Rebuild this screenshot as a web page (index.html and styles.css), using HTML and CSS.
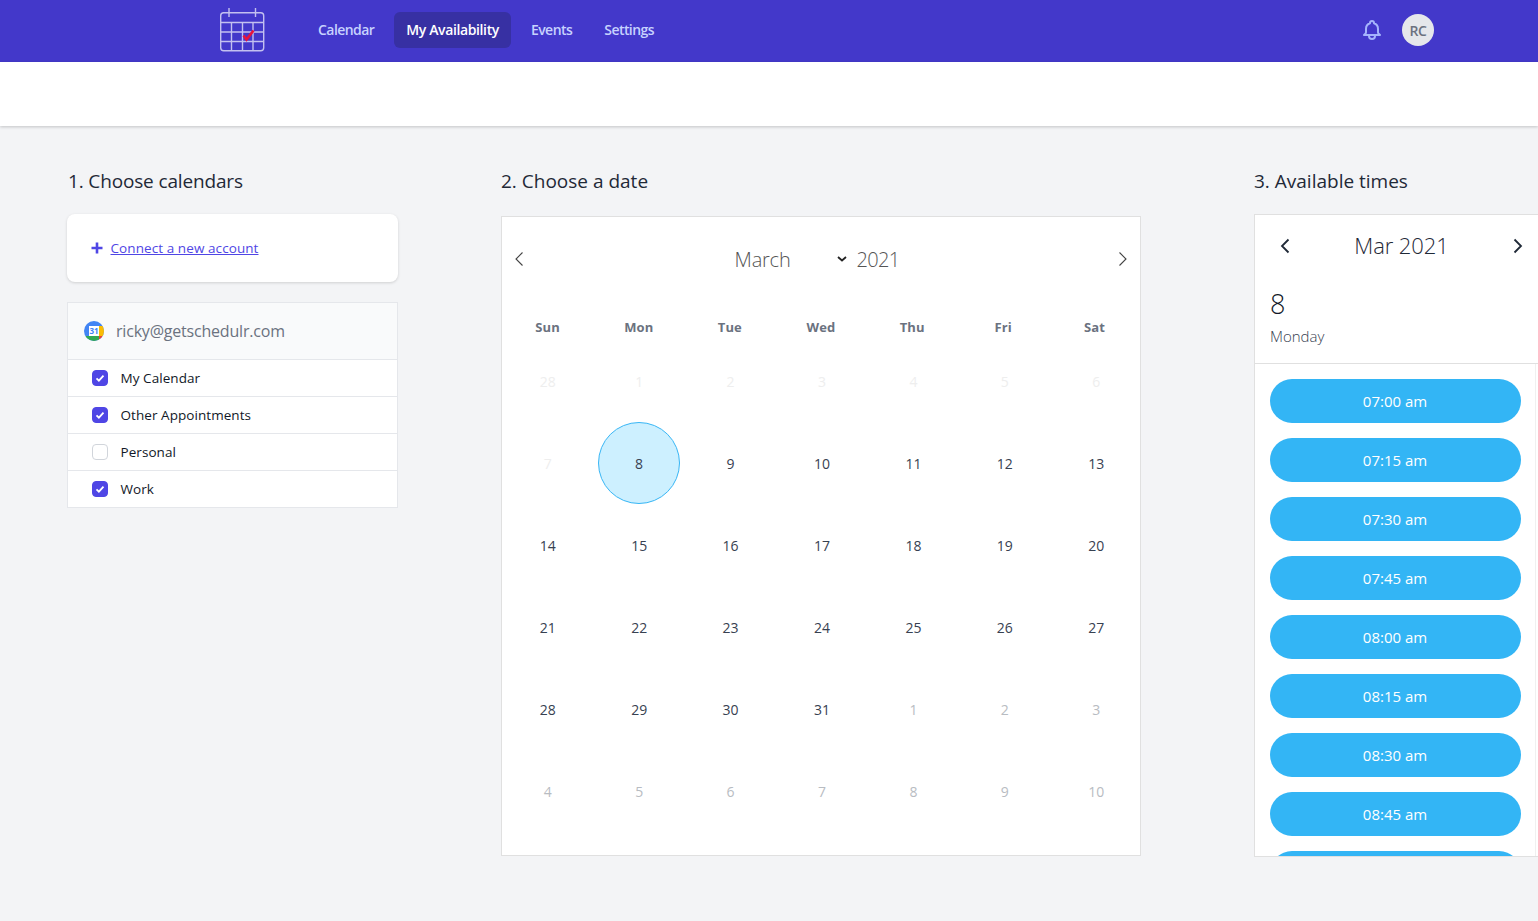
FILE: index.html
```html
<!DOCTYPE html>
<html lang="en">
<head>
<meta charset="utf-8">
<title>My Availability</title>
<link rel="stylesheet" href="styles.css">
</head>
<body>
<header class="topbar">
  <svg class="logo" width="46" height="46" viewBox="0 0 46 46" fill="none">
    <g stroke="#c3c0f0" stroke-width="1.4">
      <rect x="1.7" y="5.7" width="43" height="38" rx="3"/>
      <path d="M1.7 15.5h43M1.7 25h43M1.7 34.500h43M12.500 15.500v28M23.500 15.500v28M34 15.500v28M10 1v9M36.500 1v9"/>
    </g>
    <path d="M24.500 28.500l3 4 7-9" stroke="#e8123c" stroke-width="2.600"/>
  </svg>
  <nav class="nav">
    <a class="nav-link">Calendar</a>
    <a class="nav-link active">My Availability</a>
    <a class="nav-link">Events</a>
    <a class="nav-link">Settings</a>
  </nav>
  <div class="top-right">
    <svg class="bell" width="24" height="24" viewBox="0 0 24 24" fill="none" stroke="#a5b4fc" stroke-width="2" stroke-linecap="round" stroke-linejoin="round">
      <path d="M15 17h5l-1.400-1.400A2 2 0 0 1 18 14.200V11a6 6 0 0 0-4-5.700V5a2 2 0 1 0-4 0v.3A6 6 0 0 0 6 11v3.200c0 .5-.2 1-.6 1.400L4 17h5m6 0v1a3 3 0 1 1-6 0v-1m6 0H9"/>
    </svg>
    <div class="avatar">RC</div>
  </div>
</header>
<div class="subbar"></div>
<main class="columns">
  <section class="col col-1">
    <h2 class="col-title">1. Choose calendars</h2>
    <div class="connect-card">
      <svg class="plus" width="12" height="12" viewBox="0 0 12 12"><path d="M6 .5v11M.5 6h11" stroke="#4f46e5" stroke-width="2.600"/></svg>
      <a class="connect-link">Connect a new account</a>
    </div>
    <div class="account">
      <div class="account-head">
        <svg class="gcal" width="20" height="20" viewBox="0 0 20 20">
          <defs><clipPath id="gc"><circle cx="10" cy="10" r="10"/></clipPath></defs>
          <g clip-path="url(#gc)">
            <rect width="20" height="20" fill="#4285f4"/>
            <rect x="15" y="5" width="5" height="10" fill="#fbbc04"/>
            <rect y="15" width="15" height="5" fill="#34a853"/>
            <rect x="15" y="15" width="5" height="5" fill="#ea4335"/>
            <rect x="5" y="5" width="10" height="10" fill="#fff"/>
          </g>
          <text x="10" y="13" class="gcal-num">31</text>
        </svg>
        <span class="account-mail">ricky@getschedulr.com</span>
      </div>
      <label class="cal-row"><span class="check on"><svg width="12" height="12" viewBox="0 0 12 12"><path d="M2.500 6.300l2.400 2.400 4.600-5" stroke="#fff" stroke-width="1.800" fill="none"/></svg></span>My Calendar</label>
      <label class="cal-row"><span class="check on"><svg width="12" height="12" viewBox="0 0 12 12"><path d="M2.500 6.300l2.400 2.400 4.600-5" stroke="#fff" stroke-width="1.800" fill="none"/></svg></span>Other Appointments</label>
      <label class="cal-row"><span class="check"></span>Personal</label>
      <label class="cal-row"><span class="check on"><svg width="12" height="12" viewBox="0 0 12 12"><path d="M2.500 6.300l2.400 2.400 4.600-5" stroke="#fff" stroke-width="1.800" fill="none"/></svg></span>Work</label>
    </div>
  </section>

  <section class="col col-2">
    <h2 class="col-title">2. Choose a date</h2>
    <div class="calendar">
      <div class="cal-head">
        <svg class="cal-arrow" width="10" height="16" viewBox="0 0 10 16"><path d="M8.500 1.500L2 8l6.500 6.500" fill="none" stroke="#444" stroke-width="1.100"/></svg>
        <div class="cal-title">
          <span class="cal-month">March</span>
          <svg class="cal-caret" width="10" height="6" viewBox="0 0 10 6"><path d="M1 1l4 3.500L9 1" fill="none" stroke="#222" stroke-width="1.800"/></svg>
          <span class="cal-year">2021</span>
        </div>
        <svg class="cal-arrow" width="10" height="16" viewBox="0 0 10 16"><path d="M1.500 1.500L8 8l-6.500 6.500" fill="none" stroke="#444" stroke-width="1.100"/></svg>
      </div>
      <div class="weekdays">
        <span>Sun</span><span>Mon</span><span>Tue</span><span>Wed</span><span>Thu</span><span>Fri</span><span>Sat</span>
      </div>
      <div class="days">
        <span class="day faint">28</span><span class="day faint">1</span><span class="day faint">2</span><span class="day faint">3</span><span class="day faint">4</span><span class="day faint">5</span><span class="day faint">6</span>
        <span class="day faint">7</span><span class="day selected"><b>8</b></span><span class="day">9</span><span class="day">10</span><span class="day">11</span><span class="day">12</span><span class="day">13</span>
        <span class="day">14</span><span class="day">15</span><span class="day">16</span><span class="day">17</span><span class="day">18</span><span class="day">19</span><span class="day">20</span>
        <span class="day">21</span><span class="day">22</span><span class="day">23</span><span class="day">24</span><span class="day">25</span><span class="day">26</span><span class="day">27</span>
        <span class="day">28</span><span class="day">29</span><span class="day">30</span><span class="day">31</span><span class="day muted">1</span><span class="day muted">2</span><span class="day muted">3</span>
        <span class="day muted">4</span><span class="day muted">5</span><span class="day muted">6</span><span class="day muted">7</span><span class="day muted">8</span><span class="day muted">9</span><span class="day muted">10</span>
      </div>
    </div>
  </section>

  <section class="col col-3">
    <h2 class="col-title">3. Available times</h2>
    <div class="times">
      <div class="times-head">
        <div class="times-nav">
          <svg width="10" height="16" viewBox="0 0 10 16"><path d="M8.500 1.500L2 8l6.500 6.500" fill="none" stroke="#1f2937" stroke-width="1.800"/></svg>
          <span class="times-month">Mar 2021</span>
          <svg width="10" height="16" viewBox="0 0 10 16"><path d="M1.500 1.500L8 8l-6.500 6.500" fill="none" stroke="#1f2937" stroke-width="1.800"/></svg>
        </div>
        <div class="times-date">8</div>
        <div class="times-day">Monday</div>
      </div>
      <div class="times-list">
        <button class="slot">07:00 am</button>
        <button class="slot">07:15 am</button>
        <button class="slot">07:30 am</button>
        <button class="slot">07:45 am</button>
        <button class="slot">08:00 am</button>
        <button class="slot">08:15 am</button>
        <button class="slot">08:30 am</button>
        <button class="slot">08:45 am</button>
        <button class="slot" aria-label="09:00 am"></button>
      </div>
    </div>
  </section>
</main>
</body>
</html>
```
FILE: styles.css
```css
* { box-sizing: border-box; }
html, body { height: 921px; overflow: hidden; }
body {
  margin: 0;
  background: #f3f4f6;
  color: #111827;
  font-family: "Open Sans", "Noto Sans", sans-serif;
}
.topbar {
  height: 62px;
  background: #4338ca;
  display: flex;
  align-items: center;
  padding: 0 104px 2px 219px;
}
.logo { flex: none; }
.nav { display: flex; align-items: center; margin-left: 41px; gap: 8px; }
.nav-link {
  padding: 0 12px;
  height: 36px;
  line-height: 36px;
  border-radius: 6px;
  color: #c7d2fe;
  font-size: 14px;
  font-weight: 600;
  letter-spacing: -0.55px;
}
.nav-link.active { background: #3730a3; color: #fff; letter-spacing: -0.38px; }
.top-right { margin-left: auto; display: flex; align-items: center; gap: 18px; }
.avatar {
  width: 32px; height: 32px; border-radius: 50%;
  background: #e5e7eb; color: #6b7280;
  font-size: 14px; font-weight: 600;
  display: flex; align-items: center; justify-content: center;
  letter-spacing: -0.3px;
}
.subbar {
  height: 64px;
  background: #fff;
  box-shadow: 0 1px 3px rgba(0, 0, 0, .2);
}
.columns {
  display: grid;
  grid-template-columns: 331px 640px 290px;
  column-gap: 103px;
  padding: 41px 0 0 67px;
  width: 1538px;
}
.col-3 { margin-left: 10px; }
.col-title {
  margin: 0;
  height: 28px;
  line-height: 28px;
  font-size: 19px;
  font-weight: 400;
  color: #1f2937;
}
.col-1 .col-title { padding-left: 1px; letter-spacing: -0.15px; }
.connect-card {
  margin-top: 19px;
  height: 68px;
  background: #fff;
  border-radius: 8px;
  box-shadow: 0 1px 3px rgba(0, 0, 0, .15);
  display: flex;
  align-items: center;
  padding-left: 24px;
  gap: 7.500px;
}
.connect-link {
  color: #4f46e5;
  font-size: 13.500px;
  text-decoration: underline;
  letter-spacing: 0.08px;
}
.account {
  margin-top: 20px;
  width: 331px;
  border: 1px solid #e5e7eb;
  background: #fff;
}
.account-head {
  height: 56px;
  background: #f9fafb;
  display: flex;
  align-items: center;
  padding-left: 16px;
  gap: 12px;
}
.gcal { flex: none; }
.gcal-num { font-size: 8px; font-weight: 700; fill: #4285f4; text-anchor: middle; font-family: "Open Sans", sans-serif; }
.account-mail { color: #6b7280; font-size: 16px; font-weight: 500; letter-spacing: -0.2px; }
.cal-row {
  height: 37px;
  border-top: 1px solid #e5e7eb;
  display: flex;
  align-items: center;
  padding-left: 24px;
  gap: 12.500px;
  font-size: 13.500px;
  color: #111827;
  letter-spacing: 0.06px;
}
.check {
  width: 16px; height: 16px;
  border: 1px solid #d1d5db;
  border-radius: 4px;
  background: #fff;
  display: flex; align-items: center; justify-content: center;
  flex: none;
}
.check.on { background: #4f46e5; border-color: #4f46e5; }
.calendar {
  margin-top: 21px;
  width: 640px;
  height: 640px;
  background: #fff;
  border: 1px solid #e0e0e0;
}
.cal-head {
  height: 84px;
  display: flex;
  align-items: center;
  justify-content: space-between;
  padding: 0 12px;
}
.cal-title { display: flex; align-items: center; font-weight: 300; font-size: 20px; color: #555; margin-right: 8px; }
.cal-month { width: 102px; letter-spacing: -0.2px; }
.cal-caret { margin-right: 10px; }
.cal-year { letter-spacing: -0.7px; }
.weekdays {
  display: grid;
  grid-template-columns: repeat(7, 1fr);
  height: 52px;
  align-items: center;
  font-size: 13px;
  font-weight: 700;
  color: #6b7280;
  text-align: center;
  letter-spacing: 0.1px;
}
.days {
  width: 640px;
  display: grid;
  grid-template-columns: repeat(7, 1fr);
  grid-auto-rows: 82px;
  margin-top: -13px;
}
.day {
  display: flex; align-items: center; justify-content: center;
  font-size: 14px;
  color: #374151;
}
.day.faint { color: #eeeeee; }
.day.muted { color: #b8bcc2; }
.day.selected b {
  width: 82px; height: 82px; border-radius: 50%;
  background: #cdf0ff;
  border: 1px solid #38b6f5;
  display: flex; align-items: center; justify-content: center;
  font-weight: 400;
}
.times {
  margin-top: 19px;
  width: 290px;
  height: 643px;
  background: #fff;
  border: 1px solid #e0e0e0;
  border-right: 0;
  display: flex;
  flex-direction: column;
  overflow: hidden;
}
.times-head { flex: none; height: 149px; border-bottom: 1px solid #e0e0e0; padding: 0 15px; }
.times-nav {
  height: 60px;
  display: flex;
  align-items: center;
  justify-content: space-between;
  padding: 2px 10px 0;
  width: 263px;
}
.times-month { font-size: 22px; font-weight: 300; color: #1f2937; margin-top: -2px; letter-spacing: -0.1px; }
.times-date { font-size: 27px; font-weight: 300; line-height: 36px; margin-top: 11px; color: #111827; }
.times-day { font-size: 15px; font-weight: 300; line-height: 22px; margin-top: 3px; color: #374151; }
.times-list {
  flex: 1;
  min-height: 0;
  overflow: hidden;
  width: 281px;
  border-right: 1px solid #f0f0f0;
  padding: 15px 15px 0;
  display: flex;
  flex-direction: column;
  gap: 15px;
}
.slot {
  flex: none;
  height: 44px;
  width: 251px;
  border: 0;
  border-radius: 22px;
  background: #33b5f5;
  color: #fff;
  font-family: inherit;
  font-size: 15px;
  font-weight: 400;
  padding: 0 1px 0 0;
}
```
